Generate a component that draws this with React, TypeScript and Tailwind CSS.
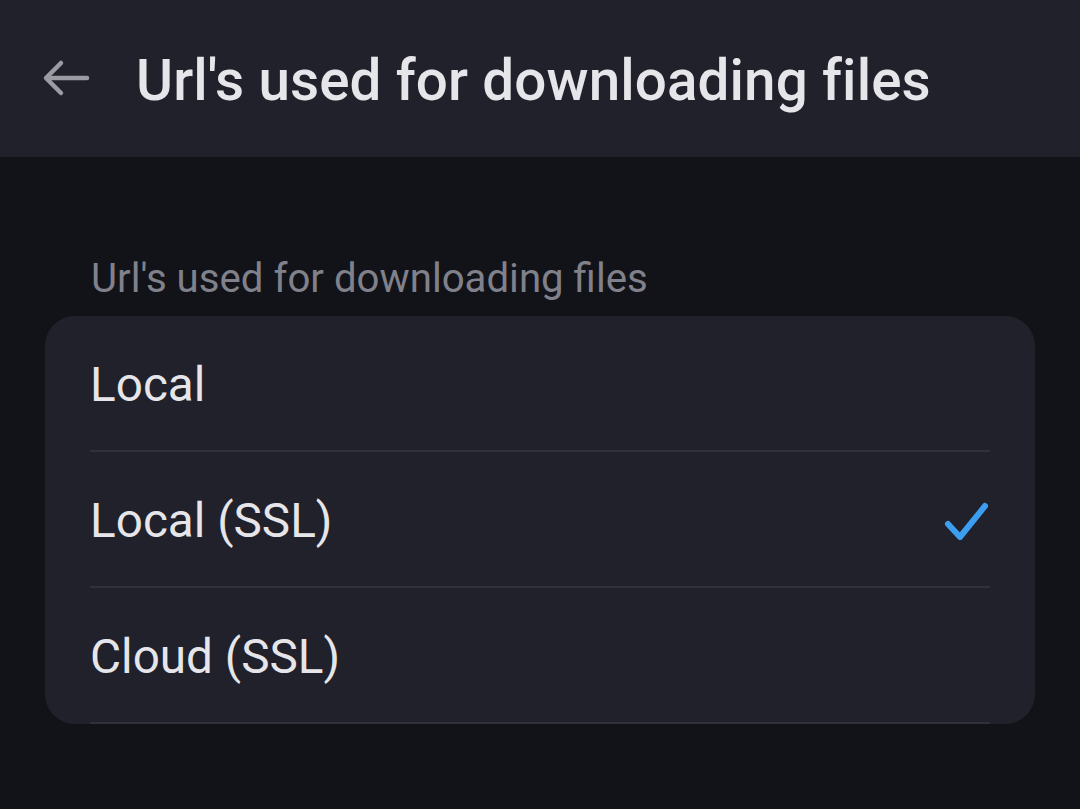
import React from 'react'

const options = ['Local', 'Local (SSL)', 'Cloud (SSL)']

export default function App() {
  const selected = 1

  return (
    <div className="w-[1080px] h-[809px] bg-[#121318] overflow-hidden" style={{ fontFamily: 'Roboto, "Noto Sans", sans-serif' }}>
      {/* header */}
      <div className="h-[157px] bg-[#20212a] flex items-center">
        <button className="w-[136px] h-full flex items-center pl-[42px]">
          <svg width="50" height="40" viewBox="0 0 50 40" fill="none" stroke="#9a9ba3" strokeWidth="4.5" strokeLinecap="round" strokeLinejoin="round">
            <path d="M45 19H5" />
            <path d="M19 4L4 19l15 15" />
          </svg>
        </button>
        <h1 className="text-[56.6px] font-medium text-[#e5e5ea] leading-none tracking-[0.1px] mt-[5px]">Url's used for downloading files</h1>
      </div>

      {/* list */}
      <div className="pt-[102px] px-[45px]">
        <div className="pl-[46px] text-[40.2px] text-[#80818b] leading-none mb-[17px]">Url's used for downloading files</div>
        <div className="bg-[#20212a] rounded-[30px] w-[990px]">
          {options.map((o, i) => (
            <div key={o} className="mx-[45px] h-[136px] border-b-[2px] border-[#30313b] flex items-center justify-between relative" style={i === options.length - 1 ? { marginBottom: -1 } : undefined}>
              <span className="text-[47.7px] text-[#e6e6ea] leading-none mt-[5px]">{o}</span>
              {i === selected && (
                <svg className="mt-[6px]" width="46" height="40" viewBox="0 0 46 40" fill="none" stroke="#3c9ef0" strokeWidth="6" strokeLinecap="round" strokeLinejoin="round">
                  <path d="M4 22l12 13L41 4" />
                </svg>
              )}
            </div>
          ))}
        </div>
      </div>
    </div>
  )
}
